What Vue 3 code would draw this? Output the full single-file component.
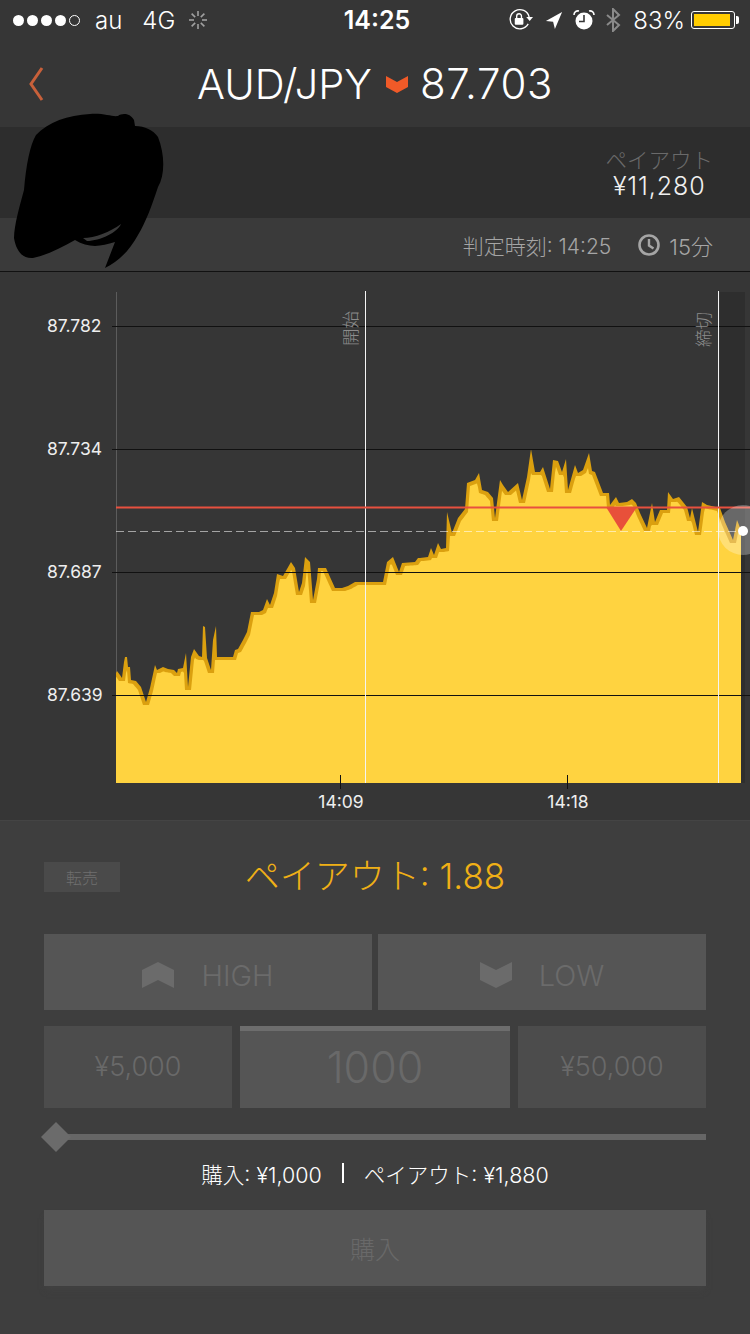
<template>
  <div class="screen">
    <header class="top">
      <div class="status">
        <div class="status-left">
          <span class="signal">
            <i v-for="n in 4" :key="n" class="dot"></i>
            <i class="dot empty"></i>
          </span>
          <span class="carrier">au</span>
          <span class="net">4G</span>
          <svg class="spinner" width="20" height="20" viewBox="0 0 20 20">
            <line
              v-for="n in 8"
              :key="n"
              x1="10" y1="1" x2="10" y2="6"
              stroke="#a0a0a0" stroke-width="1.6"
              :transform="`rotate(${n * 45} 10 10)`"
            />
          </svg>
        </div>
        <div class="clock">14:25</div>
        <div class="status-right">
          <svg width="24" height="24" viewBox="0 0 25 24">
            <path d="M20 16a10 10 0 1 1 1-7" fill="none" stroke="#fff" stroke-width="1.4" />
            <path d="M18 9h7l-3.5 4z" fill="#fff" />
            <rect x="6" y="10" width="9" height="7" rx="1" fill="#fff" />
            <path d="M8 10V8a2.5 2.5 0 0 1 5 0v2" fill="none" stroke="#fff" stroke-width="1.4" />
          </svg>
          <svg class="ico-loc" width="18" height="18" viewBox="0 0 20 20">
            <path d="M19 1 1 11l8 1 2 8z" fill="#fff" />
          </svg>
          <svg class="ico-alarm" width="22" height="22" viewBox="0 0 22 22">
            <circle cx="11" cy="12" r="8.5" fill="#fff" />
            <path d="M11 6v6.500H6" fill="none" stroke="#363636" stroke-width="1.6" />
            <path d="M1 6a4 4 0 0 1 5-4M21 6a4 4 0 0 0-5-4" fill="none" stroke="#fff" stroke-width="1.6" />
          </svg>
          <svg class="ico-bt" width="17" height="24" viewBox="0 0 17 24">
            <path d="M2 7l12 10-6 6V1l6 6L2 17" fill="none" stroke="#8a8a8a" stroke-width="2" />
          </svg>
          <span class="pct">83%</span>
          <span class="battery"><i></i></span>
        </div>
      </div>

      <div class="nav">
        <svg class="back" width="18" height="36" viewBox="0 0 18 36">
          <path d="M15 2 4 18l11 16" fill="none" stroke="#c8603a" stroke-width="3" />
        </svg>
        <span class="pair">AUD/JPY</span>
        <svg class="nav-arrow" width="24" height="20" viewBox="0 0 24 20">
          <path d="M1 2l11 6 11-6v11l-11 6-11-6z" fill="#f05a28" />
        </svg>
        <span class="price">87.703</span>
      </div>
    </header>

    <section class="info">
      <div class="payout-box">
        <div class="payout-label">ペイアウト</div>
        <div class="payout-value">¥11,280</div>
      </div>
    </section>

    <section class="sub">
      <span>判定時刻: 14:25</span>
      <span class="timer">
        <svg width="24" height="24" viewBox="0 0 24 24">
          <circle cx="12" cy="12" r="9.500" fill="none" stroke="#a5a5a5" stroke-width="2.600" />
          <path d="M12 6v6.500l4.500 3" fill="none" stroke="#a5a5a5" stroke-width="2.400" />
        </svg>
        15分
      </span>
    </section>

    <svg class="chart" width="750" height="548" viewBox="0 272 750 548">
      <rect x="720" y="292" width="25" height="491" fill="#2e2e2e" />
      <line x1="116.500" y1="292" x2="116.500" y2="783" stroke="#5c5c5c" />
      <g v-for="g in grid" :key="g.y">
        <line x1="112" :y1="g.y + 0.5" x2="750" :y2="g.y + 0.5" stroke="#111" />
        <text class="axis" x="47" :y="g.y + 6">{{ g.label }}</text>
      </g>

      <polygon :points="goldPoints" fill="#dba00f" />
      <polygon :points="fillPoints" fill="#ffd340" />
      <g v-for="g in grid" :key="'o' + g.y">
        <line x1="116" :y1="g.y + 0.5" x2="742" :y2="g.y + 0.5" stroke="#111" />
      </g>

      <line x1="116" y1="531.500" x2="750" y2="531.500" stroke="#fff" stroke-opacity="0.55" stroke-dasharray="8 4" />
      <line x1="365.500" y1="291" x2="365.500" y2="783" stroke="#f4f4f4" />
      <line x1="718.500" y1="291" x2="718.500" y2="783" stroke="#f4f4f4" />
      <line x1="116" y1="507.500" x2="750" y2="507.500" stroke="#e8503f" stroke-width="2" />
      <polygon points="606,507 637,507 621,531" fill="#e8503a" />
      <circle cx="743" cy="530" r="25" fill="#fff" opacity="0.28" />
      <circle cx="743" cy="531" r="5" fill="#fff" />

      <text class="vert" transform="translate(357 346) rotate(-90)">開始</text>
      <text class="vert" transform="translate(710 347) rotate(-90)">締切</text>

      <line x1="340.500" y1="775" x2="340.500" y2="789" stroke="#111" />
      <line x1="567.500" y1="775" x2="567.500" y2="789" stroke="#111" />
      <text class="axis mid" x="341" y="808">14:09</text>
      <text class="axis mid" x="568" y="808">14:18</text>
    </svg>

    <section class="panel">
      <div class="head">
        <button class="resale">転売</button>
        <div class="rate">ペイアウト: 1.88</div>
      </div>

      <div class="dirs">
        <div class="dir">
          <svg width="32" height="26" viewBox="0 0 32 26">
            <path d="M0 8 16 0l16 8v18L16 18 0 26z" fill="#6b6b6b" />
          </svg>
          HIGH
        </div>
        <div class="dir">
          <svg width="32" height="26" viewBox="0 0 32 26">
            <path d="M0 0l16 8 16-8v18l-16 8-16-8z" fill="#6b6b6b" />
          </svg>
          LOW
        </div>
      </div>

      <div class="amounts">
        <div class="amount">¥5,000</div>
        <div class="amount current">1000</div>
        <div class="amount">¥50,000</div>
      </div>

      <div class="slider"><i class="thumb"></i></div>

      <div class="summary">
        <span>購入: ¥1,000</span>
        <i class="sep"></i>
        <span>ペイアウト: ¥1,880</span>
      </div>

      <div class="buy">購入</div>
    </section>

    <!-- scribbled out by whoever took the screenshot -->
    <svg class="scribble" width="170" height="180" viewBox="0 100 170 180">
      <path
        fill="#000"
        fill-rule="evenodd"
        d="M90 114C104 113 112 117 118 116C122 113 130 113 134 120L135 126C145 126 153 130 158 137C165 155 165 175 158 187C152 205 146 222 138 235C130 250 118 262 105 268L115 242C100 247 88 248 75 240C62 247 48 255 33 258C22 259 16 250 14 238C14 225 20 205 24 190C26 165 30 145 36 135C48 122 68 115 90 114ZM83 238C95 238 110 232 121 224C118 232 100 241 87 241Z"
      />
    </svg>
  </div>
</template>

<script setup>
const grid = [
  { y: 326, label: '87.782' },
  { y: 449, label: '87.734' },
  { y: 572, label: '87.687' },
  { y: 695, label: '87.639' }
]

// traced price line, real page coordinates
const line = [
  [116, 673], [117, 671], [120, 675], [122, 678], [124, 662], [125, 657], [127, 657], [128, 667],
  [130, 667], [131, 680], [136, 681], [141, 687], [146, 702], [150, 688], [155, 665], [157, 670],
  [163, 667], [168, 669], [174, 670], [177, 673], [178, 669], [183, 668], [186, 653], [188, 687],
  [191, 657], [194, 649], [199, 656], [202, 657], [203, 626], [205, 627], [207, 658], [211, 670],
  [213, 640], [216, 626], [217, 657], [220, 657], [233, 657], [235, 650], [238, 649], [243, 640],
  [247, 632], [251, 612], [257, 612], [259, 612], [263, 610], [267, 599], [270, 605], [274, 593],
  [277, 574], [283, 576], [291, 562], [295, 568], [299, 592], [302, 583], [305, 557], [310, 562],
  [313, 600], [317, 579], [318, 568], [326, 568], [330, 577], [335, 588], [342, 588], [348, 586],
  [355, 582], [363, 582], [383, 582], [387, 562], [393, 557], [399, 572], [402, 563], [415, 562],
  [418, 558], [420, 558], [428, 557], [431, 548], [434, 555], [438, 543], [441, 549], [446, 548],
  [447, 512], [452, 533], [458, 518], [465, 509], [467, 483], [475, 480], [479, 473], [482, 490],
  [488, 492], [493, 498], [495, 518], [500, 480], [503, 485], [508, 492], [518, 483], [522, 500],
  [527, 477], [531, 449], [535, 472], [540, 472], [543, 467], [550, 489], [553, 460], [558, 461],
  [562, 472], [566, 459], [568, 490], [575, 465], [578, 473], [583, 470], [589, 453], [592, 471],
  [595, 472], [603, 493], [609, 493], [610, 505], [616, 497], [619, 503], [627, 502], [632, 499],
  [636, 503], [640, 513], [647, 528], [652, 503], [655, 522], [660, 510], [667, 510], [668, 492],
  [673, 499], [679, 497], [687, 507], [690, 518], [692, 508], [698, 532], [702, 502], [707, 505],
  [720, 508], [725, 522], [733, 540], [737, 520], [741, 530]
]

const toPoints = (pts) => `116,783 ${pts.map(([x, y]) => `${x},${y}`).join(' ')} 741,783`

const lineAt = (x) => {
  const i = line.findIndex((p) => p[0] >= x)
  if (i <= 0) return line[Math.max(i, 0)][1]
  const [x0, y0] = line[i - 1]
  const [x1, y1] = line[i]
  return y0 + ((y1 - y0) * (x - x0)) / (x1 - x0)
}

// light fill sits under the line and skips the thin spikes, which stay gold
const fillLine = []
for (let x = 116; x <= 741; x++) {
  let low = 0
  for (let d = -3; d <= 3; d++) low = Math.max(low, lineAt(Math.min(741, Math.max(116, x + d))))
  fillLine.push([x, low + 3])
}

const goldPoints = toPoints(line)
const fillPoints = toPoints(fillLine)
</script>

<style>
html,
body {
  background: #3e3e3e;
}
</style>

<style scoped>
.screen {
  position: relative;
  width: 750px;
  height: 1334px;
  overflow: hidden;
  background: #3e3e3e;
  font-family: Inter, "Noto Sans CJK JP", sans-serif;
  font-weight: 300;
  color: #fff;
}

/* ── Top ── */
.top {
  height: 127px;
  background: #363636;
}

.status {
  display: flex;
  align-items: center;
  justify-content: space-between;
  height: 40px;
  padding: 0 11px 0 13px;
  font-size: 24px;
  position: relative;
}

.status-left,
.status-right {
  display: flex;
  align-items: center;
}

.signal {
  display: flex;
  gap: 3px;
}

.dot {
  width: 11px;
  height: 11px;
  border-radius: 50%;
  background: #fff;
}

.dot.empty {
  background: none;
  border: 1px solid #fff;
  box-sizing: border-box;
}

.carrier {
  margin-left: 15px;
}

.net {
  margin-left: 20px;
}

.spinner {
  margin-left: 13px;
}

.clock {
  position: absolute;
  left: 4px;
  right: 0;
  text-align: center;
  font-weight: 600;
  font-size: 25px;
}

.ico-loc {
  margin-left: 12px;
}

.ico-alarm {
  margin-left: 10px;
}

.ico-bt {
  margin-left: 10px;
}

.pct {
  margin-left: 11px;
  font-size: 24px;
}

.battery {
  position: relative;
  width: 44px;
  height: 18px;
  margin: 0 4px 0 6px;
  padding: 2px;
  box-sizing: border-box;
  border: 1px solid #fff;
  border-radius: 3px;
}

.battery::after {
  content: "";
  position: absolute;
  right: -5px;
  top: 4px;
  width: 3px;
  height: 8px;
  background: #fff;
  border-radius: 0 2px 2px 0;
}

.battery i {
  display: block;
  width: 36px;
  height: 100%;
  background: #ffcc00;
}

.nav {
  position: relative;
  display: flex;
  align-items: center;
  justify-content: center;
  height: 87px;
  font-size: 41.5px;
}

.price {
  font-size: 42px;
  letter-spacing: 0.6px;
}

.back {
  position: absolute;
  left: 27px;
  top: 26px;
}

.nav-arrow {
  margin: 0 11px 0 13px;
}

/* ── Info bands ── */
.info {
  display: flex;
  justify-content: flex-end;
  align-items: center;
  height: 91px;
  padding-right: 37px;
  background: #2d2d2d;
}

.payout-box {
  text-align: center;
}

.payout-label {
  font-size: 21.500px;
  line-height: 26px;
  color: #6a6a6a;
  margin-top: 2px;
}

.payout-value {
  font-size: 25px;
  line-height: 27px;
  letter-spacing: 0.9px;
  color: #f0f0f0;
}

.sub {
  display: flex;
  justify-content: flex-end;
  align-items: center;
  gap: 26px;
  height: 53px;
  padding-right: 37px;
  background: #3a3a3a;
  border-bottom: 1px solid #111;
  font-size: 21px;
  color: #a5a5a5;
}

.timer {
  display: flex;
  align-items: center;
  gap: 8px;
  font-size: 22px;
}

/* ── Chart ── */
.chart {
  display: block;
  background: #363636;
}

.axis {
  font-family: Inter, sans-serif;
  font-weight: 400;
  font-size: 17.500px;
  fill: #eee;
}

.axis.mid {
  text-anchor: middle;
}

.vert {
  font-size: 17.500px;
  fill: #8c8c8c;
}

/* ── Bottom panel ── */
.panel {
  padding: 0 44px;
  border-top: 1px solid #444;
}

.head {
  display: grid;
  grid-template-columns: 76px 1fr 76px;
  align-items: center;
  height: 113px;
}

.resale {
  height: 30px;
  margin-bottom: 2px;
  padding: 0;
  border: 0;
  background: #4a4a4a;
  color: #6f6f6f;
  font: inherit;
  font-size: 16px;
}

.rate {
  padding-bottom: 8px;
  text-align: center;
  font-size: 35px;
  color: #f0b016;
}

.dirs {
  display: grid;
  grid-template-columns: 1fr 1fr;
  gap: 6px;
}

.dir {
  display: flex;
  align-items: center;
  justify-content: center;
  gap: 27px;
  box-sizing: border-box;
  height: 76px;
  padding-top: 6px;
  background: #555;
  color: #6b6b6b;
  font-size: 29px;
}

.amounts {
  display: grid;
  grid-template-columns: 188px 1fr 188px;
  gap: 8px;
  margin-top: 16px;
}

.amount {
  display: flex;
  align-items: center;
  justify-content: center;
  box-sizing: border-box;
  height: 82px;
  padding-bottom: 2px;
  background: #4c4c4c;
  color: #696969;
  font-size: 27px;
}

.amount.current {
  padding-bottom: 6px;
  border-top: 5px solid #6d6d6d;
  background: #555;
  font-size: 43px;
}

.slider {
  position: relative;
  height: 6px;
  margin: 26px 0 0 11px;
  background: #666;
}

.thumb {
  position: absolute;
  left: -14px;
  top: -12px;
  width: 30px;
  height: 30px;
  background: #6b6b6b;
  clip-path: polygon(50% 0, 100% 50%, 50% 100%, 0 50%);
}

.summary {
  display: flex;
  align-items: center;
  justify-content: center;
  gap: 20px;
  height: 40px;
  margin-top: 13px;
  font-size: 21.500px;
}

.sep {
  width: 2px;
  height: 20px;
  background: #fff;
}

.buy {
  display: flex;
  align-items: center;
  justify-content: center;
  height: 76px;
  margin-top: 17px;
  background: #555;
  box-shadow: 0 6px 6px -2px #414141;
  color: #696969;
  font-size: 25px;
}

/* ── Scribble over the account name ── */
.scribble {
  position: absolute;
  left: 0;
  top: 100px;
}
</style>
